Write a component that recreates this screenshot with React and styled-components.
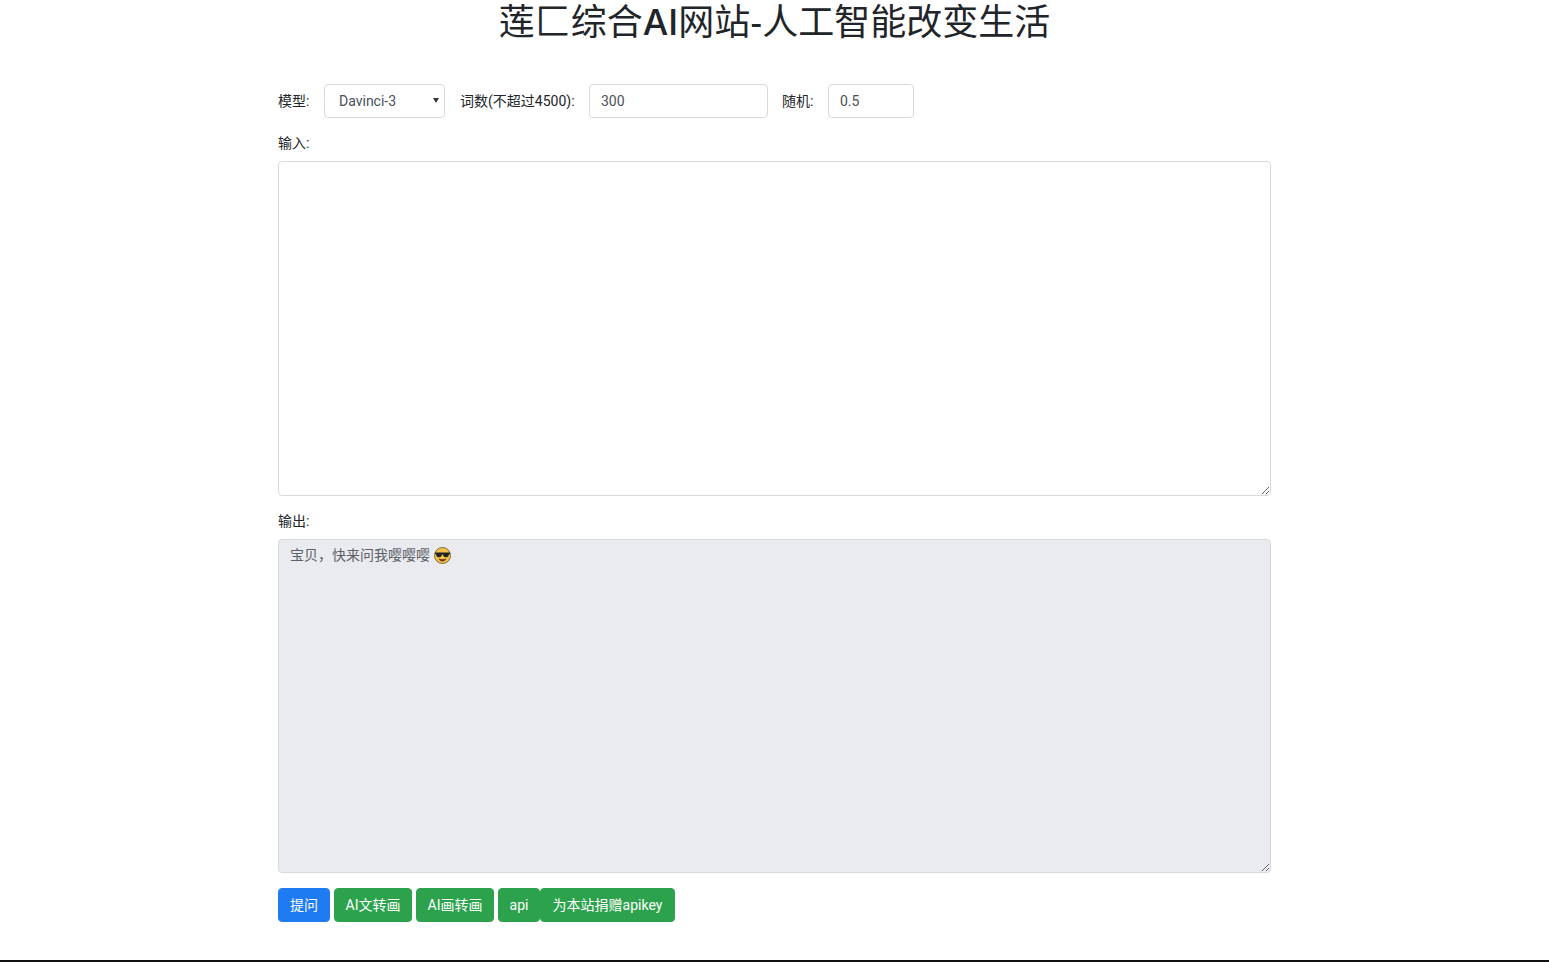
import React from "react";
import styled, { createGlobalStyle } from "styled-components";

const Global = createGlobalStyle`
  html, body { margin: 0; padding: 0; background: #fff; }
  body {
    font-family: Roboto, "Noto Sans CJK SC", sans-serif;
    font-size: 14px;
    line-height: 21px;
    color: #212529;
  }
  * { box-sizing: border-box; }
`;

const Page = styled.div`
  height: 962px;
  display: flex;
  flex-direction: column;
  border-bottom: 2px solid #111;
  overflow: hidden;
`;

const Title = styled.h1`
  margin: 0 0 39px;
  font-size: 36px;
  font-weight: 400;
  line-height: 44px;
  text-align: center;
  font-family: "Liberation Sans", "Noto Sans CJK SC", sans-serif;
`;

const TitleLatin = styled.span`
  font-family: Inter, "Liberation Sans", sans-serif;
  font-weight: 500;
`;

const Main = styled.main`
  width: 993px;
  margin-left: 278px;
  display: flex;
  flex-direction: column;
`;

const Options = styled.div`
  display: flex;
  align-items: center;
  height: 34px;
  margin-bottom: 15px;
`;

const Label = styled.label`
  display: block;
  white-space: nowrap;
  width: ${(p) => p.$width}px;
  margin-right: ${(p) => p.$gap ?? 0}px;
`;

const BlockLabel = styled.label`
  display: block;
  height: 21px;
  margin-bottom: 7px;
`;

const SelectWrap = styled.div`
  position: relative;
  width: 121px;
  height: 34px;
  margin-right: 15px;
  &::after {
    content: "";
    position: absolute;
    top: 14px;
    right: 6px;
    border-left: 3px solid transparent;
    border-right: 3px solid transparent;
    border-top: 5px solid #343a40;
    pointer-events: none;
  }
`;

const Select = styled.select`
  appearance: none;
  width: 100%;
  height: 100%;
  padding: 0 20px 0 14px;
  border: 1px solid #d6dade;
  border-radius: 4px;
  background: #fff;
  color: #495057;
  font: inherit;
`;

const Input = styled.input`
  width: ${(p) => p.$width}px;
  height: 34px;
  margin-right: ${(p) => p.$gap ?? 0}px;
  padding: 0 11px;
  border: 1px solid #d6dade;
  border-radius: 4px;
  background: #fff;
  color: #495057;
  font: inherit;
`;

const AreaWrap = styled.div`
  position: relative;
  margin-bottom: 15px;
  height: ${(p) => p.$height}px;
`;

const Area = styled.textarea`
  display: block;
  width: 100%;
  height: 100%;
  padding: 5px 11px;
  border: 1px solid #d6dade;
  border-radius: 4px;
  background: ${(p) => (p.readOnly ? "#e9ebee" : "#fff")};
  color: #5a6067;
  font: inherit;
  outline: none;
`;

const Emoji = styled.svg`
  position: absolute;
  left: 156px;
  top: 8px;
  width: 17px;
  height: 17px;
`;

const Actions = styled.div`
  display: flex;
  gap: 4px;
`;

const Button = styled.button`
  width: ${(p) => p.$width}px;
  height: 34px;
  padding: 0;
  border: 1px solid ${(p) => (p.$primary ? "#1f7bf2" : "#2ca24c")};
  border-radius: 4px;
  background: ${(p) => (p.$primary ? "#1f7bf2" : "#2ca24c")};
  color: #fff;
  font: inherit;
  white-space: nowrap;
`;

const JoinedButton = styled(Button)`
  margin-left: -4px;
`;

function SunglassesFace() {
  return (
    <Emoji viewBox="0 0 17 17" aria-hidden="true">
      <circle cx="8.5" cy="8.5" r="8" fill="#f2c04c" stroke="#6b5320" strokeWidth="0.8" />
      <path d="M1 5.6h15v1.3l-1 .4c-.3 2-1.2 2.9-3 2.9-1.8 0-2.8-1-3-2.7h-1c-.2 1.7-1.2 2.7-3 2.7-1.8 0-2.7-.9-3-2.9l-1-.4z" fill="#222" />
      <path d="M4.6 11.6c1 2.2 2.4 3 3.9 3s2.9-.8 3.9-3c-2.4.9-5.4.9-7.8 0z" fill="#6b3d16" />
    </Emoji>
  );
}

export default function App() {
  return (
    <Page>
      <Global />
      <Title>莲匚综合<TitleLatin>AI</TitleLatin>网站-人工智能改变生活</Title>
      <Main>
        <Options>
          <Label $width={32} $gap={14}>模型:</Label>
          <SelectWrap>
            <Select defaultValue="davinci">
              <option value="davinci">Davinci-3</option>
            </Select>
          </SelectWrap>
          <Label $width={116} $gap={13}>词数(不超过4500):</Label>
          <Input $width={179} $gap={14} defaultValue="300" />
          <Label $width={33} $gap={13}>随机:</Label>
          <Input $width={86} defaultValue="0.5" />
        </Options>
        <BlockLabel>输入:</BlockLabel>
        <AreaWrap $height={335}>
          <Area />
        </AreaWrap>
        <BlockLabel>输出:</BlockLabel>
        <AreaWrap $height={334}>
          <Area readOnly defaultValue="宝贝，快来问我嘤嘤嘤" />
          <SunglassesFace />
        </AreaWrap>
        <Actions>
          <Button $primary $width={52}>提问</Button>
          <Button $width={78}>AI文转画</Button>
          <Button $width={78}>AI画转画</Button>
          <Button $width={42}>api</Button>
          <JoinedButton $width={135}>为本站捐赠apikey</JoinedButton>
        </Actions>
      </Main>
    </Page>
  );
}
